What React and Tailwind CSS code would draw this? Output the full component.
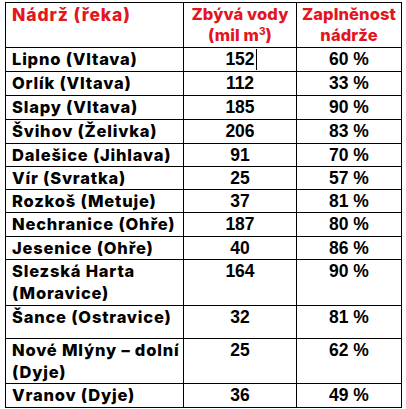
import React from "react";

const rows = [
  { name: ["Lipno (Vltava)"], v: "152", p: "60 %", h: "h-[23px]", cursor: true },
  { name: ["Orlík (Vltava)"], v: "112", p: "33 %", h: "h-[23px]" },
  { name: ["Slapy (Vltava)"], v: "185", p: "90 %", h: "h-[23px]" },
  { name: ["Švihov (Želivka)"], v: "206", p: "83 %", h: "h-[23px]" },
  { name: ["Dalešice (Jihlava)"], v: "91", p: "70 %", h: "h-[22px]" },
  { name: ["Vír (Svratka)"], v: "25", p: "57 %", h: "h-[22px]" },
  { name: ["Rozkoš (Metuje)"], v: "37", p: "81 %", h: "h-[22px]" },
  { name: ["Nechranice (Ohře)"], v: "187", p: "80 %", h: "h-[23px]" },
  { name: ["Jesenice (Ohře)"], v: "40", p: "86 %", h: "h-[22px]" },
  { name: ["Slezská Harta", "(Moravice)"], v: "164", p: "90 %", h: "h-[45px]" },
  { name: ["Šance (Ostravice)"], v: "32", p: "81 %", h: "h-[32px]" },
  { name: ["Nové Mlýny – dolní", "(Dyje)"], v: "25", p: "62 %", h: "h-[44px]" },
  { name: ["Vranov (Dyje)"], v: "36", p: "49 %", h: "h-[23px]" },
];

const nameFont = "font-['Inter',sans-serif] font-extrabold text-[16.5px] tracking-[0.8px]";
const head1Font = "font-['Inter',sans-serif] font-extrabold text-[17.5px] tracking-[0.9px]";
const headFont = "font-['Inter',sans-serif] font-extrabold text-[16.5px] tracking-[0.1px]";
const numFont = "font-['Liberation_Sans',sans-serif] font-bold text-[17.5px]";

export default function App() {
  return (
    <div className="w-[406px] h-[409px] bg-white pt-[2px] pl-[5px] overflow-hidden">
      <table className="border-collapse table-fixed w-[396px] text-black">
        <colgroup>
          <col className="w-[178px]" />
          <col className="w-[113px]" />
          <col className="w-[105px]" />
        </colgroup>
        <tbody>
          <tr>
            <td className="border border-black align-top p-0">
              <div className={`h-[44px] pl-[6px] pt-[1px] leading-[21px] text-[#e3151d] ${head1Font}`}>
                Nádrž (řeka)
              </div>
            </td>
            <td className="border border-black align-top p-0">
              <div className={`h-[44px] pt-[1px] text-center leading-[21px] text-[#e3151d] ${headFont}`}>
                Zbývá vody
                <br />
                (mil m<span className="relative -top-[6px] text-[10px]">3</span>)
              </div>
            </td>
            <td className="border border-black align-top p-0">
              <div className={`h-[44px] pt-[1px] text-center leading-[21px] text-[#e3151d] ${headFont}`}>
                Zaplněnost
                <br />
                nádrže
              </div>
            </td>
          </tr>
          {rows.map((r, i) => (
            <tr key={i}>
              <td className="border border-black align-top p-0">
                <div className={`${r.h} pl-[6px] leading-[22px] whitespace-nowrap ${nameFont}`}>
                  {r.name.map((n, j) => (
                    <div key={j}>{n}</div>
                  ))}
                </div>
              </td>
              <td className="border border-black align-top p-0">
                <div className={`${r.h} text-center leading-[22px] ${numFont}`}>
                  <span className="relative">
                    {r.v}
                    {r.cursor && (
                      <span className="absolute -right-[2px] top-[0px] w-[1px] h-[21px] bg-black" />
                    )}
                  </span>
                </div>
              </td>
              <td className="border border-black align-top p-0">
                <div className={`${r.h} text-center leading-[22px] ${numFont}`}>{r.p}</div>
              </td>
            </tr>
          ))}
        </tbody>
      </table>
    </div>
  );
}
